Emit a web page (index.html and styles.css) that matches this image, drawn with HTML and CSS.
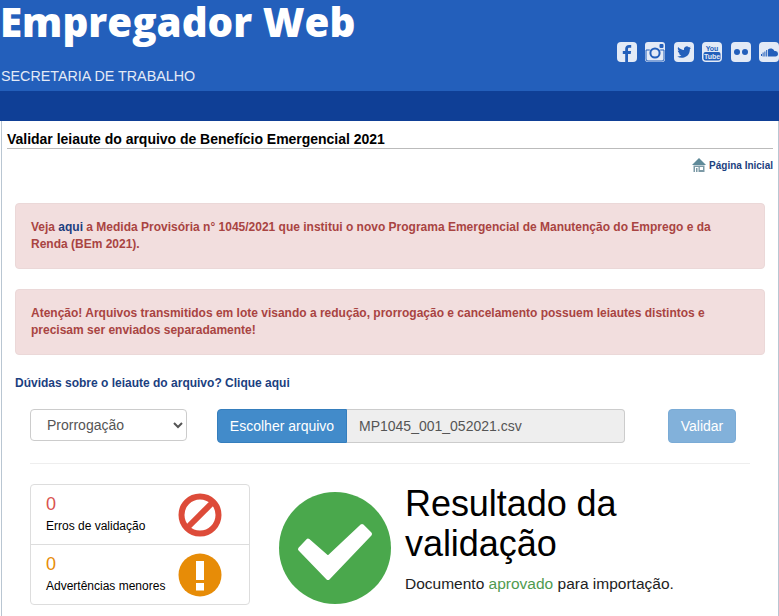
FILE: index.html
```html
<!DOCTYPE html>
<html lang="pt-BR">
<head>
    <meta charset="UTF-8">
    <meta name="viewport" content="width=device-width, initial-scale=1.0">
    <title>Empregador Web</title>
    <link rel="stylesheet" href="styles.css">
</head>
<body>

<header class="top">
    <div class="brand">
        <h1>Empregador Web</h1>
        <p>SECRETARIA DE TRABALHO</p>
    </div>
    <div class="social">
        <svg viewBox="0 0 20 20"><rect width="20" height="20" rx="4" fill="#e3eaf6"/><path d="M11 20v-8h2.700l.4-3H11V7.200c0-.9.3-1.400 1.500-1.400H14.200V3.100C13.800 3 13 3 12 3 9.800 3 8.200 4.300 8.200 6.800V9H5.800v3h2.400v8z" fill="#235fbb"/></svg>
        <svg viewBox="0 0 20 20"><rect width="20" height="20" rx="3" fill="#e3eaf6"/><circle cx="10" cy="11" r="4.600" fill="none" stroke="#235fbb" stroke-width="2"/><rect x="14.500" y="2" width="4" height="4" rx="1" fill="#235fbb"/><path d="M1 8h3.800M15.200 8H19M1 8v9a2 2 0 0 0 2 2h14a2 2 0 0 0 2-2V8" fill="none" stroke="#235fbb" stroke-width="1"/></svg>
        <svg viewBox="0 0 20 20"><rect width="20" height="20" rx="4" fill="#e3eaf6"/><path d="M17 5.700c-.5.200-1 .4-1.600.4.600-.3 1-.9 1.200-1.500-.5.300-1.100.6-1.800.7a2.800 2.800 0 0 0-4.800 2.600C7.700 7.800 5.600 6.700 4.200 5c-.8 1.300-.4 3 .9 3.800-.5 0-.9-.1-1.300-.4 0 1.400 1 2.600 2.300 2.900-.4.100-.9.100-1.300 0 .4 1.100 1.400 1.900 2.600 2-1.200.9-2.700 1.300-4.200 1.200 4.800 3 12.700.6 12.700-7.600.5-.3 1-.7 1.100-1.200z" fill="#235fbb"/></svg>
        <svg viewBox="0 0 20 20"><rect width="20" height="20" rx="4" fill="#e3eaf6"/><rect x="1.500" y="10" width="17" height="8.500" rx="2" fill="#235fbb"/><text x="10" y="8.600" class="yt">You</text><text x="10" y="17.300" class="yt yt-light">Tube</text></svg>
        <svg viewBox="0 0 20 20"><rect width="20" height="20" rx="4" fill="#e3eaf6"/><circle cx="6" cy="10" r="3" fill="#235fbb"/><circle cx="14" cy="10" r="3" fill="#235fbb"/></svg>
        <svg viewBox="0 0 20 20"><rect width="20" height="20" rx="4" fill="#e3eaf6"/><path d="M9 14.500V7.500a4 4 0 0 1 6.500 1.600h1A2.700 2.700 0 0 1 19 12c0 1.500-1 2.500-2.500 2.500zM7.200 14.500V8h1v6.500zM5.400 14.500V9.500h1v5zM3.600 14.500V10.500h1v4zM2 14V12h1v2z" fill="#235fbb"/></svg>
    </div>
</header>
<nav class="navbar"></nav>

<main class="content">
    <h2 class="page-title">Validar leiaute do arquivo de Benefício Emergencial 2021</h2>

    <div class="home-row">
        <a class="home-link" href="#">
            <svg viewBox="0 0 14 14" width="14" height="14"><path d="M7 0 14 7H0z" fill="#5f8a99"/><path d="M1.500 7.500h11V14h-11z" fill="#7c9aa6"/><path d="M3 9h3.500v5H3zM7.800 9h3.200v3H7.800z" fill="#fff"/><path d="M4 10h1.500v4H4z" fill="#7c9aa6"/></svg>
            Página Inicial
        </a>
    </div>

    <div class="alert">Veja <a href="#">aqui</a> a Medida Provisória n° 1045/2021 que institui o novo Programa Emergencial de Manutenção do Emprego e da Renda (BEm 2021).</div>
    <div class="alert">Atenção! Arquivos transmitidos em lote visando a redução, prorrogação e cancelamento possuem leiautes distintos e precisam ser enviados separadamente!</div>

    <a class="help-link" href="#">Dúvidas sobre o leiaute do arquivo? Clique aqui</a>

    <div class="form-area">
        <div class="form-row">
            <select class="type-select">
                <option>Prorrogação</option>
            </select>
            <div class="file-group">
                <button class="btn-file">Escolher arquivo</button>
                <span class="file-name">MP1045_001_052021.csv</span>
            </div>
            <button class="btn-validate">Validar</button>
        </div>

        <div class="result-row">
            <div class="counts">
                <div class="count-item">
                    <div>
                        <div class="count-number red">0</div>
                        <div class="count-label">Erros de validação</div>
                    </div>
                    <svg viewBox="0 0 44 44" width="44" height="44"><circle cx="22" cy="22" r="18.500" fill="none" stroke="#dd4b39" stroke-width="6"/><path d="M9 35 35 9" stroke="#dd4b39" stroke-width="6"/></svg>
                </div>
                <div class="count-item">
                    <div>
                        <div class="count-number orange">0</div>
                        <div class="count-label">Advertências menores</div>
                    </div>
                    <svg viewBox="0 0 44 44" width="44" height="44"><circle cx="22" cy="22" r="21.500" fill="#e78c07"/><path d="M18 8h8v19h-8zM18 30h8v7.500h-8z" fill="#fff"/></svg>
                </div>
            </div>
            <svg class="big-check" viewBox="0 0 112 112" width="112" height="112"><circle cx="56" cy="56" r="56" fill="#4aa84c"/><path d="M21 57 29 48.500 49 66 83 34 91 42 49 86z" fill="#fff" stroke="#fff" stroke-width="4" stroke-linejoin="round"/></svg>
            <div class="result-text">
                <h3>Resultado da validação</h3>
                <p>Documento <span class="approved">aprovado</span> para importação.</p>
            </div>
        </div>
    </div>
</main>

</body>
</html>
```

FILE: styles.css
```css
html, body {
    height: 616px;
    overflow: hidden;
}

body {
    font-family: 'Liberation Sans', Arial, sans-serif;
    margin: 0;
    color: #000;
    background-color: #fff;
}

.top {
    height: 91px;
    background-color: #235fbb;
    display: flex;
    justify-content: space-between;
    box-sizing: border-box;
}

.brand h1 {
    font-family: 'Open Sans', sans-serif;
    font-size: 40.300px;
    font-weight: 800;
    line-height: 44px;
    color: #fff;
    margin: 0;
}

.brand p {
    font-size: 14.300px;
    line-height: 16px;
    color: #e3eaf6;
    margin: 24px 0 0 1px;
}

.social {
    display: flex;
    gap: 8.400px;
    margin: 42px 0 0 0;
}

.social svg {
    width: 20px;
    height: 20px;
}

.yt {
    font-family: 'Liberation Sans', sans-serif;
    font-size: 7px;
    font-weight: 700;
    text-anchor: middle;
    fill: #235fbb;
}

.yt-light {
    fill: #e3eaf6;
}

.navbar {
    height: 30px;
    background-color: #0f3f96;
}

.content {
    margin: 0 0 0 1px;
    border-left: 1px solid #b9c6d2;
    border-right: 1px solid #b9c6d2;
    height: 495px;
    box-sizing: border-box;
    padding: 0 5px;
}

.page-title {
    font-size: 14px;
    font-weight: 700;
    letter-spacing: -.02px;
    line-height: 16px;
    margin: 0;
    padding: 10px 0 1px;
    border-bottom: 1px solid #bbb;
}

.home-row {
    display: flex;
    justify-content: flex-end;
    margin-top: 9px;
}

.home-link {
    display: flex;
    align-items: center;
    gap: 3px;
    font-size: 10px;
    font-weight: 700;
    color: #1c3f80;
    text-decoration: none;
    height: 14px;
}

.alert {
    margin: 31px 8px 0;
    height: 66px;
    box-sizing: border-box;
    padding: 15px 15px 0;
    background-color: #f2dede;
    border: 1px solid #ebd8d8;
    border-radius: 4px;
    color: #a94442;
    font-size: 12px;
    font-weight: 700;
    line-height: 17px;
}

.alert + .alert {
    margin-top: 20px;
}

.alert a {
    color: #1c3f80;
    text-decoration: none;
}

.help-link {
    display: block;
    margin: 20px 0 0 8px;
    font-size: 12px;
    font-weight: 700;
    line-height: 17px;
    color: #1c3f80;
    text-decoration: none;
}

.form-area {
    margin: 0 23px;
}

.form-row {
    display: flex;
    align-items: flex-start;
    margin-top: 17px;
    height: 54px;
    border-bottom: 1px solid #eee;
}

.type-select {
    width: 157px;
    height: 32px;
    padding: 0 12px;
    font-family: 'Liberation Sans', sans-serif;
    font-size: 14px;
    color: #555;
    background-color: #fff;
    border: 1px solid #ccc;
    border-radius: 4px;
    margin-right: 30px;
}

.file-group {
    display: flex;
    height: 34px;
    width: 408px;
}

.btn-file {
    width: 130px;
    padding: 0;
    font-family: 'Liberation Sans', sans-serif;
    font-size: 14px;
    color: #fff;
    background-color: #428bca;
    border: 1px solid #357ebd;
    border-radius: 4px 0 0 4px;
}

.file-name {
    flex: 1;
    display: flex;
    align-items: center;
    padding-left: 12px;
    font-size: 14px;
    color: #555;
    background-color: #eee;
    border: 1px solid #ccc;
    border-left: 0;
    border-radius: 0 4px 4px 0;
}

.btn-validate {
    width: 68px;
    height: 34px;
    margin-left: 43px;
    padding: 0;
    font-family: 'Liberation Sans', sans-serif;
    font-size: 14px;
    color: #fff;
    background-color: #82b1da;
    border: 1px solid #7aabd6;
    border-radius: 4px;
}

.result-row {
    display: flex;
    margin-top: 20px;
}

.counts {
    width: 220px;
    height: 121px;
    box-sizing: border-box;
    border: 1px solid #ddd;
    border-radius: 4px;
    flex-shrink: 0;
}

.count-item {
    height: 59px;
    box-sizing: border-box;
    display: flex;
    justify-content: space-between;
    align-items: center;
    padding: 0 27px 0 15px;
}

.count-item + .count-item {
    height: 60px;
    border-top: 1px solid #ddd;
}

.count-number {
    font-size: 18px;
    line-height: 20px;
}

.red {
    color: #d9534f;
}

.orange {
    color: #e78c07;
}

.count-label {
    font-size: 12px;
    line-height: 17px;
    margin-top: 4px;
}

.big-check {
    margin: 8px 0 0 29px;
    flex-shrink: 0;
}

.result-text {
    margin-left: 14px;
    width: 290px;
}

.result-text h3 {
    font-size: 36px;
    font-weight: 400;
    letter-spacing: -.05px;
    line-height: 40px;
    margin: 0;
}

.result-text p {
    font-size: 15.500px;
    line-height: 20px;
    margin: 10px 0 0;
    color: #222;
}

.approved {
    color: #4f9a4f;
}
```
